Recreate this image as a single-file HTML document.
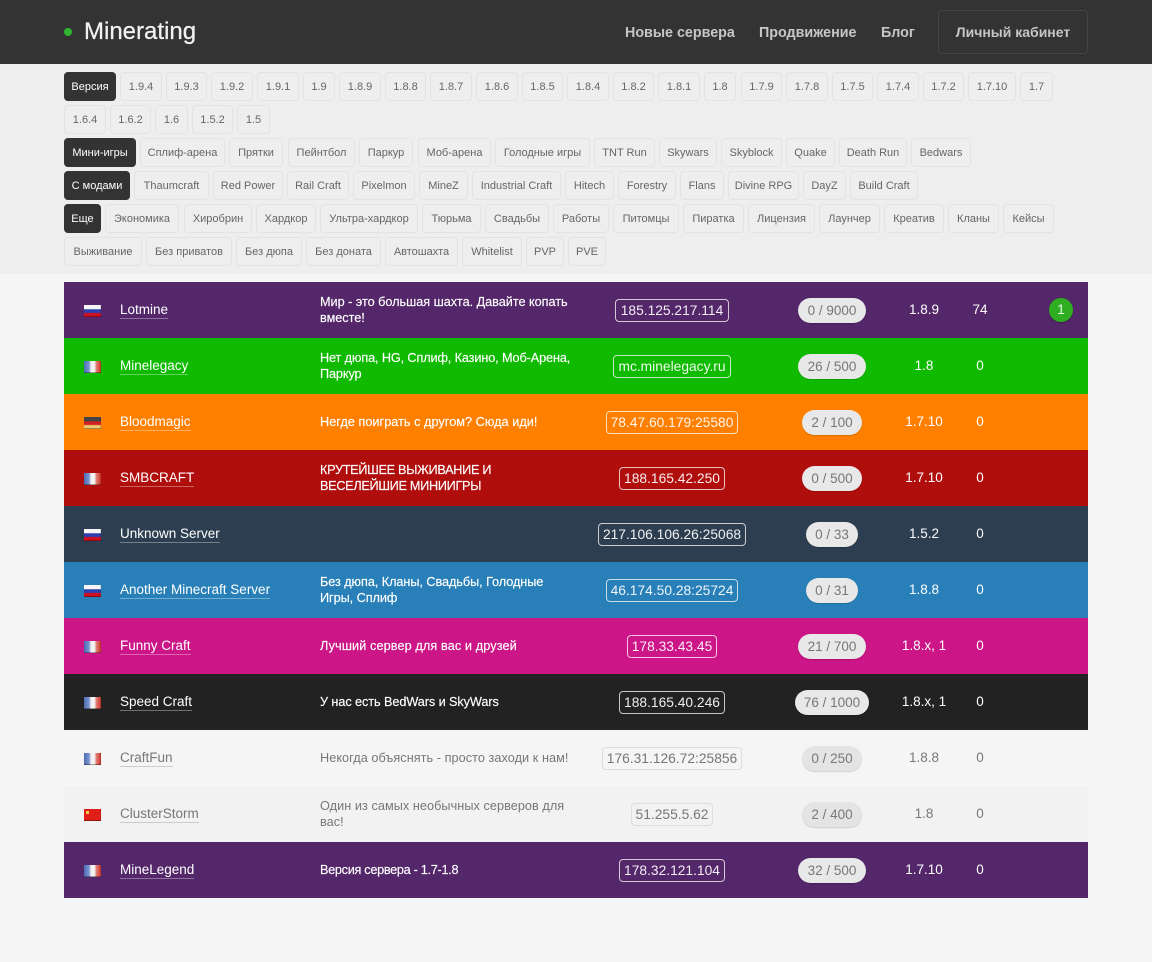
<!DOCTYPE html>
<html lang="ru"><head><meta charset="utf-8"><title>Minerating</title>
<style>
*{box-sizing:border-box}
html,body{margin:0;padding:0}
body{width:1152px;height:962px;overflow:hidden;position:relative;background:#f5f5f5;font-family:"Liberation Sans","Noto Sans CJK SC",sans-serif}
a{color:inherit;text-decoration:none}
.hd{position:absolute;left:0;top:0;width:1152px;height:64px;background:#333}
.dot{position:absolute;left:64px;top:28px;width:8px;height:8px;border-radius:50%;background:#2fb52f}
.logo{position:absolute;left:84px;top:16px;font-size:24px;line-height:32px;color:#f2f2f2;-webkit-text-stroke:.25px #f2f2f2}
.nav{position:absolute;top:23px;font-size:14.3px;line-height:20px;font-weight:bold;color:#c6c6c6;white-space:nowrap}
.cab{position:absolute;left:938px;top:10px;width:150px;height:44px;border:1px solid #444;border-radius:4px;text-align:center;font-size:14px;line-height:42px;font-weight:bold;color:#c6c6c6}
.fl{position:absolute;left:0;top:64px;width:1152px;height:210px;background:#eee}
.b{position:absolute;height:29px;border:1px solid #e3e3e3;border-radius:4px;text-align:center;font-size:11px;line-height:28px;color:#666;white-space:nowrap}
.a{background:#333;border-color:#333;color:#fff}
.r{position:absolute;left:64px;width:1024px;height:56px;color:#fff}
.f{position:absolute;left:20px;top:23px;width:17px;height:12px;box-shadow:inset 0 -1px rgba(0,0,0,.35),inset -1px 0 rgba(0,0,0,.12)}
.ru{background:linear-gradient(#f6f6f6 0 33%,#2b3fb0 38% 62%,#d01020 70%)}
.fr{background:linear-gradient(90deg,#4a6bb5,#7d96cf 30%,#f2f2f2 42%,#f2f2f2 62%,#e08078 72%,#d03528)}
.de{background:linear-gradient(#444 0 33%,#d02020 40% 62%,#eecb70 72%)}
.cn{background:#e02018}
.cn:before{content:"";position:absolute;left:2px;top:2px;width:3px;height:3px;background:#f0d040}
.n{position:absolute;left:56px;top:19px;font-size:13.5px;line-height:17px;border-bottom:1px solid rgba(255,255,255,.35);white-space:nowrap}
.d{position:absolute;left:256px;top:12px;width:300px;font-size:12.7px;line-height:16px;white-space:nowrap;-webkit-text-stroke:.15px currentColor}
.l .d{-webkit-text-stroke:0}
.d.o{top:20px}
.i{position:absolute;top:17px;height:23px;border:1px solid rgba(255,255,255,.75);border-radius:4px;text-align:center;font-size:13.8px;line-height:21px;white-space:nowrap;color:rgba(255,255,255,.92)}
.p{position:absolute;top:16px;height:25px;border-radius:13px;background:#e8e8e8;box-shadow:0 1px 1px rgba(0,0,0,.15);text-align:center;color:#777;font-size:13.5px;line-height:25px;white-space:nowrap}
.v{position:absolute;left:810px;width:100px;top:19px;text-align:center;font-size:13.5px;line-height:18px;white-space:nowrap}
.s{position:absolute;left:886px;width:60px;top:19px;text-align:center;font-size:13.5px;line-height:18px}
.l{color:#777}
.l .n{border-bottom-color:#ccc}
.l .i{border-color:#ddd;color:#777}
.l .p{background:#e4e4e4;color:#777}
.g{position:absolute;left:985px;top:16px;width:24px;height:24px;border-radius:50%;background:#2fae22;color:#e8f5e8;text-align:center;font-size:13.5px;line-height:24px;box-shadow:0 1px 1px rgba(0,0,0,.2)}
</style></head><body>
<div class="hd">
<div class="dot"></div><a class="logo" href="#">Minerating</a>
<a class="nav" style="left:625px" href="#">Новые сервера</a>
<a class="nav" style="left:759px" href="#">Продвижение</a>
<a class="nav" style="left:881px" href="#">Блог</a>
<a class="cab" href="#">Личный кабинет</a>
</div>
<div class="fl"></div>

<a class="b a" href="#" style="left:64px;top:72px;width:52px">Версия</a>
<a class="b" href="#" style="left:120px;top:72px;width:42px">1.9.4</a>
<a class="b" href="#" style="left:166px;top:72px;width:41px">1.9.3</a>
<a class="b" href="#" style="left:211px;top:72px;width:42px">1.9.2</a>
<a class="b" href="#" style="left:257px;top:72px;width:42px">1.9.1</a>
<a class="b" href="#" style="left:303px;top:72px;width:32px">1.9</a>
<a class="b" href="#" style="left:339px;top:72px;width:42px">1.8.9</a>
<a class="b" href="#" style="left:385px;top:72px;width:41px">1.8.8</a>
<a class="b" href="#" style="left:430px;top:72px;width:42px">1.8.7</a>
<a class="b" href="#" style="left:476px;top:72px;width:42px">1.8.6</a>
<a class="b" href="#" style="left:522px;top:72px;width:41px">1.8.5</a>
<a class="b" href="#" style="left:567px;top:72px;width:42px">1.8.4</a>
<a class="b" href="#" style="left:613px;top:72px;width:41px">1.8.2</a>
<a class="b" href="#" style="left:658px;top:72px;width:42px">1.8.1</a>
<a class="b" href="#" style="left:704px;top:72px;width:32px">1.8</a>
<a class="b" href="#" style="left:741px;top:72px;width:41px">1.7.9</a>
<a class="b" href="#" style="left:786px;top:72px;width:42px">1.7.8</a>
<a class="b" href="#" style="left:832px;top:72px;width:41px">1.7.5</a>
<a class="b" href="#" style="left:877px;top:72px;width:42px">1.7.4</a>
<a class="b" href="#" style="left:923px;top:72px;width:41px">1.7.2</a>
<a class="b" href="#" style="left:968px;top:72px;width:48px">1.7.10</a>
<a class="b" href="#" style="left:1020px;top:72px;width:33px">1.7</a>

<a class="b" href="#" style="left:64px;top:105px;width:42px">1.6.4</a>
<a class="b" href="#" style="left:110px;top:105px;width:41px">1.6.2</a>
<a class="b" href="#" style="left:155px;top:105px;width:33px">1.6</a>
<a class="b" href="#" style="left:192px;top:105px;width:41px">1.5.2</a>
<a class="b" href="#" style="left:237px;top:105px;width:33px">1.5</a>

<a class="b a" href="#" style="left:64px;top:138px;width:72px">Мини-игры</a>
<a class="b" href="#" style="left:140px;top:138px;width:85px">Сплиф-арена</a>
<a class="b" href="#" style="left:229px;top:138px;width:54px">Прятки</a>
<a class="b" href="#" style="left:288px;top:138px;width:67px">Пейнтбол</a>
<a class="b" href="#" style="left:359px;top:138px;width:54px">Паркур</a>
<a class="b" href="#" style="left:418px;top:138px;width:73px">Моб-арена</a>
<a class="b" href="#" style="left:495px;top:138px;width:95px">Голодные игры</a>
<a class="b" href="#" style="left:594px;top:138px;width:61px">TNT Run</a>
<a class="b" href="#" style="left:659px;top:138px;width:58px">Skywars</a>
<a class="b" href="#" style="left:721px;top:138px;width:61px">Skyblock</a>
<a class="b" href="#" style="left:786px;top:138px;width:49px">Quake</a>
<a class="b" href="#" style="left:839px;top:138px;width:68px">Death Run</a>
<a class="b" href="#" style="left:911px;top:138px;width:60px">Bedwars</a>

<a class="b a" href="#" style="left:64px;top:171px;width:66px">С модами</a>
<a class="b" href="#" style="left:134px;top:171px;width:75px">Thaumcraft</a>
<a class="b" href="#" style="left:213px;top:171px;width:70px">Red Power</a>
<a class="b" href="#" style="left:287px;top:171px;width:62px">Rail Craft</a>
<a class="b" href="#" style="left:353px;top:171px;width:62px">Pixelmon</a>
<a class="b" href="#" style="left:419px;top:171px;width:49px">MineZ</a>
<a class="b" href="#" style="left:472px;top:171px;width:89px">Industrial Craft</a>
<a class="b" href="#" style="left:565px;top:171px;width:49px">Hitech</a>
<a class="b" href="#" style="left:618px;top:171px;width:58px">Forestry</a>
<a class="b" href="#" style="left:680px;top:171px;width:44px">Flans</a>
<a class="b" href="#" style="left:728px;top:171px;width:71px">Divine RPG</a>
<a class="b" href="#" style="left:803px;top:171px;width:43px">DayZ</a>
<a class="b" href="#" style="left:850px;top:171px;width:68px">Build Craft</a>

<a class="b a" href="#" style="left:64px;top:204px;width:37px">Еще</a>
<a class="b" href="#" style="left:105px;top:204px;width:74px">Экономика</a>
<a class="b" href="#" style="left:184px;top:204px;width:68px">Хиробрин</a>
<a class="b" href="#" style="left:256px;top:204px;width:60px">Хардкор</a>
<a class="b" href="#" style="left:320px;top:204px;width:98px">Ультра-хардкор</a>
<a class="b" href="#" style="left:422px;top:204px;width:59px">Тюрьма</a>
<a class="b" href="#" style="left:485px;top:204px;width:64px">Свадьбы</a>
<a class="b" href="#" style="left:553px;top:204px;width:56px">Работы</a>
<a class="b" href="#" style="left:613px;top:204px;width:66px">Питомцы</a>
<a class="b" href="#" style="left:683px;top:204px;width:61px">Пиратка</a>
<a class="b" href="#" style="left:748px;top:204px;width:67px">Лицензия</a>
<a class="b" href="#" style="left:819px;top:204px;width:61px">Лаунчер</a>
<a class="b" href="#" style="left:884px;top:204px;width:60px">Креатив</a>
<a class="b" href="#" style="left:948px;top:204px;width:51px">Кланы</a>
<a class="b" href="#" style="left:1003px;top:204px;width:51px">Кейсы</a>

<a class="b" href="#" style="left:64px;top:237px;width:78px">Выживание</a>
<a class="b" href="#" style="left:146px;top:237px;width:86px">Без приватов</a>
<a class="b" href="#" style="left:236px;top:237px;width:66px">Без дюпа</a>
<a class="b" href="#" style="left:306px;top:237px;width:75px">Без доната</a>
<a class="b" href="#" style="left:385px;top:237px;width:73px">Автошахта</a>
<a class="b" href="#" style="left:462px;top:237px;width:60px">Whitelist</a>
<a class="b" href="#" style="left:526px;top:237px;width:38px">PVP</a>
<a class="b" href="#" style="left:568px;top:237px;width:38px">PVE</a>

<div class="r" style="top:282px;background:#54266a"><i class="f ru"></i><a class="n" href="#">Lotmine</a><div class="d" style="letter-spacing:-.03px">Мир - это большая шахта. Давайте копать<br>вместе!</div><div class="i" style="left:551px;width:114px">185.125.217.114</div><div class="p" style="left:734px;width:68px">0 / 9000</div><div class="v">1.8.9</div><div class="s">74</div><div class="g">1</div></div>
<div class="r" style="top:338px;background:#0fba00"><i class="f fr"></i><a class="n" href="#">Minelegacy</a><div class="d" style="letter-spacing:-.12px">Нет дюпа, HG, Сплиф, Казино, Моб-Арена,<br>Паркур</div><div class="i" style="left:549px;width:118px">mc.minelegacy.ru</div><div class="p" style="left:734px;width:68px">26 / 500</div><div class="v">1.8</div><div class="s">0</div></div>
<div class="r" style="top:394px;background:#ff8000"><i class="f de"></i><a class="n" href="#">Bloodmagic</a><div class="d o" style="letter-spacing:.03px">Негде поиграть с другом? Сюда иди!</div><div class="i" style="left:542px;width:132px">78.47.60.179:25580</div><div class="p" style="left:738px;width:60px">2 / 100</div><div class="v">1.7.10</div><div class="s">0</div></div>
<div class="r" style="top:450px;background:#b00d0d"><i class="f fr"></i><a class="n" href="#">SMBCRAFT</a><div class="d" style="letter-spacing:-.3px">КРУТЕЙШЕЕ ВЫЖИВАНИЕ И<br>ВЕСЕЛЕЙШИЕ МИНИИГРЫ</div><div class="i" style="left:555px;width:106px">188.165.42.250</div><div class="p" style="left:738px;width:60px">0 / 500</div><div class="v">1.7.10</div><div class="s">0</div></div>
<div class="r" style="top:506px;background:#2c3e50"><i class="f ru"></i><a class="n" href="#">Unknown Server</a><div class="i" style="left:534px;width:148px">217.106.106.26:25068</div><div class="p" style="left:742px;width:52px">0 / 33</div><div class="v">1.5.2</div><div class="s">0</div></div>
<div class="r" style="top:562px;background:#2980b9"><i class="f ru"></i><a class="n" href="#">Another Minecraft Server</a><div class="d" style="letter-spacing:-.06px">Без дюпа, Кланы, Свадьбы, Голодные<br>Игры, Сплиф</div><div class="i" style="left:542px;width:132px">46.174.50.28:25724</div><div class="p" style="left:742px;width:52px">0 / 31</div><div class="v">1.8.8</div><div class="s">0</div></div>
<div class="r" style="top:618px;background:#cc1587"><i class="f fr"></i><a class="n" href="#">Funny Craft</a><div class="d o" style="letter-spacing:.1px">Лучший сервер для вас и друзей</div><div class="i" style="left:563px;width:90px">178.33.43.45</div><div class="p" style="left:734px;width:68px">21 / 700</div><div class="v">1.8.x, 1</div><div class="s">0</div></div>
<div class="r" style="top:674px;background:#222"><i class="f fr"></i><a class="n" href="#">Speed Craft</a><div class="d o" style="letter-spacing:-.08px">У нас есть BedWars и SkyWars</div><div class="i" style="left:555px;width:106px">188.165.40.246</div><div class="p" style="left:731px;width:74px">76 / 1000</div><div class="v">1.8.x, 1</div><div class="s">0</div></div>
<div class="r l" style="top:730px;background:#f5f5f5"><i class="f fr"></i><a class="n" href="#">CraftFun</a><div class="d o" style="letter-spacing:.05px">Некогда объяснять - просто заходи к нам!</div><div class="i" style="left:538px;width:140px">176.31.126.72:25856</div><div class="p" style="left:738px;width:60px">0 / 250</div><div class="v">1.8.8</div><div class="s">0</div></div>
<div class="r l" style="top:786px;background:#f2f2f2"><i class="f cn"></i><a class="n" href="#">ClusterStorm</a><div class="d" style="letter-spacing:.05px">Один из самых необычных серверов для<br>вас!</div><div class="i" style="left:567px;width:82px">51.255.5.62</div><div class="p" style="left:738px;width:60px">2 / 400</div><div class="v">1.8</div><div class="s">0</div></div>
<div class="r" style="top:842px;background:#54266a"><i class="f fr"></i><a class="n" href="#">MineLegend</a><div class="d o" style="letter-spacing:-.3px">Версия сервера - 1.7-1.8</div><div class="i" style="left:555px;width:106px">178.32.121.104</div><div class="p" style="left:734px;width:68px">32 / 500</div><div class="v">1.7.10</div><div class="s">0</div></div>
</body></html>
